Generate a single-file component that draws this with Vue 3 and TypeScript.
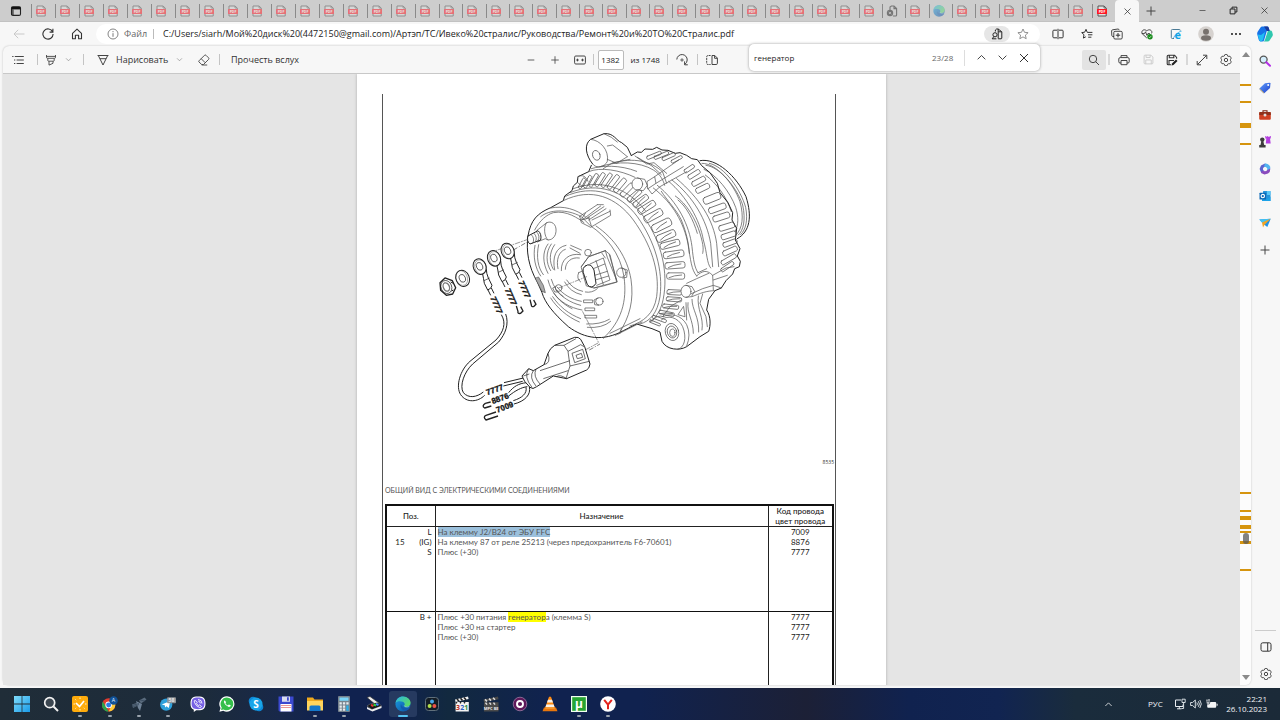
<script setup lang="ts">
import { ref } from 'vue'

type TabKind = 'pdf' | 'doc' | 'edge' | 'live'

const leftTabs: TabKind[] = Array.from({ length: 17 }, () => 'pdf')
const rightTabs: TabKind[] = Array.from({ length: 29 }, (_, i) =>
  i === 19 ? 'doc' : i === 21 ? 'edge' : i === 28 ? 'live' : 'pdf',
)

const query = ref('генератор')
const page = ref('1382')
const url =
  'C:/Users/siarh/Мой%20диск%20(4472150@gmail.com)/Артэп/ТС/Ивеко%20стралис/Руководства/Ремонт%20и%20ТО%20Стралис.pdf'

const browserActions = [
  { icon: 'split', label: 'Разделить экран' },
  { icon: 'favs', label: 'Избранное' },
  { icon: 'collections', label: 'Коллекции' },
  { icon: 'health', label: 'Производительность' },
  { icon: 'ie', label: 'Режим Internet Explorer' },
  { icon: 'profile', label: 'Профиль' },
  { icon: 'dots', label: 'Параметры' },
  { icon: 'copilot', label: 'Copilot' },
]

const sideApps = [
  { icon: 's-search', label: 'Поиск' },
  { icon: 's-tag', label: 'Покупки' },
  { icon: 's-tools', label: 'Инструменты' },
  { icon: 's-games', label: 'Игры' },
  { icon: 's-365', label: 'Microsoft 365' },
  { icon: 's-outlook', label: 'Outlook' },
  { icon: 's-drop', label: 'Drop' },
  { icon: 'plus', label: 'Настроить' },
]

const marks = [
  { y: 38, h: 2 },
  { y: 55, h: 2 },
  { y: 77, h: 5 },
  { y: 97, h: 2 },
  { y: 446, h: 2 },
  { y: 464, h: 2 },
  { y: 470, h: 4 },
  { y: 479, h: 4 },
  { y: 485, h: 2 },
  { y: 495, h: 3 },
  { y: 523, h: 2 },
]

const taskApps = [
  { icon: 't-win', label: 'Пуск', open: false },
  { icon: 't-search', label: 'Поиск', open: false },
  { icon: 't-clock', label: 'Часы', open: true },
  { icon: 't-chrome', label: 'Chrome', open: true },
  { icon: 't-sat', label: 'Спутник', open: true },
  { icon: 't-telegram', label: 'Telegram', open: true },
  { icon: 't-viber', label: 'Viber', open: false },
  { icon: 't-whatsapp', label: 'WhatsApp', open: false },
  { icon: 't-skype', label: 'Skype', open: false },
  { icon: 't-floppy', label: 'Total Commander', open: false },
  { icon: 't-folder', label: 'Проводник', open: true },
  { icon: 't-calc', label: 'Калькулятор', open: true },
  { icon: 't-scan', label: 'Сканер', open: false },
  { icon: 'edge', label: 'Edge', open: true },
  { icon: 't-resolve', label: 'DaVinci Resolve', open: false },
  { icon: 't-mpc', label: 'Media Player Classic', open: false },
  { icon: 't-mpcbe', label: 'MPC-BE', open: false },
  { icon: 't-disc', label: 'Диск', open: false },
  { icon: 't-vlc', label: 'VLC', open: false },
  { icon: 't-utorrent', label: 'uTorrent', open: true },
  { icon: 't-yandex', label: 'Yandex', open: true },
]

// Ventilation slots: centre x, centre y, length, width, angle
const rearSlots: number[][] = [
  [186, 190, 34, 9, -62], [203, 185, 40, 10, -62], [221, 181, 44, 11, -60], [240, 179, 46, 12, -58],
  [260, 181, 48, 12, -56], [280, 186, 50, 13, -53], [300, 196, 50, 14, -50], [321, 210, 50, 15, -46],
  [343, 227, 50, 16, -40], [362, 243, 52, 17, -36], [380, 262, 58, 19, -32], [400, 287, 60, 22, -28],
  [425, 316, 62, 25, -26], [438, 348, 60, 22, -22], [450, 373, 60, 19, -14], [461, 403, 62, 20, -8],
  [465, 436, 60, 19, -4], [467, 468, 54, 19, 0], [463, 517, 44, 15, 3], [462, 538, 46, 13, 4],
  [452, 560, 48, 12, 6], [440, 580, 46, 11, 12], [418, 597, 44, 9, 20], [405, 609, 34, 7, 22],
]
const frontSlots: number[][] = [
  [508, 146, 34, 11, -34], [522, 163, 40, 13, -32], [536, 184, 44, 15, -28], [548, 205, 44, 16, -26],
  [576, 235, 54, 21, -22], [592, 265, 54, 18, -20], [604, 291, 52, 18, -18], [620, 320, 48, 17, -17],
  [626, 346, 46, 16, -18], [630, 369, 44, 14, -20], [630, 393, 46, 15, -24], [626, 418, 50, 13, -30],
  [622, 440, 44, 11, -34],
]
const topSlots: number[][] = [
  [402, 106, 46, 10, -22], [424, 106, 46, 10, -22], [446, 110, 42, 10, -24], [470, 118, 36, 9, -28],
]
// Ring terminals: x, y
const lugs = [
  { x: 149, y: 440 },
  { x: 192, y: 415 },
  { x: 233, y: 393 },
]
</script>

<template>
  <div class="screen">
    <svg class="sprite" aria-hidden="true">
      <defs>
        <linearGradient id="g-edge" x1="0" y1="0" x2="1" y2="1">
          <stop offset="0" stop-color="#1b9de2" /><stop offset="1" stop-color="#0c4f9f" />
        </linearGradient>
        <linearGradient id="g-edge2" x1="0" y1="0" x2="1" y2="0.6">
          <stop offset="0" stop-color="#27b5e8" /><stop offset="1" stop-color="#5bd968" />
        </linearGradient>
        <linearGradient id="g-win" x1="0" y1="0" x2="1" y2="1">
          <stop offset="0" stop-color="#7fdcfb" /><stop offset="1" stop-color="#1a9be8" />
        </linearGradient>
        <linearGradient id="g-tag" x1="0" y1="0" x2="1" y2="1">
          <stop offset="0" stop-color="#5fa0ff" /><stop offset="1" stop-color="#1f3fc9" />
        </linearGradient>
        <symbol id="pdf" viewBox="0 0 12 12">
          <path d="M2 1h6l2.200 2v8H2z" fill="#e2e2e2" stroke="#555" stroke-width="1" />
          <path d="M8 1v2h2.200" fill="none" stroke="#555" stroke-width=".8" />
          <rect x="1" y="4" width="10" height="5" rx=".6" fill="#ff1622" />
          <text x="6" y="7.700" text-anchor="middle" font-size="3.500" font-weight="700" fill="#fff">PDF</text>
        </symbol>
        <symbol id="doc" viewBox="0 0 12 12">
          <path d="M4 5V2l1.400-1H8l2.600 2.400V10q0 1-1 1H7M8 1v2.600h2.400" fill="none" stroke="#222" stroke-width="1.100" />
          <circle cx="4" cy="8" r="3.200" fill="#222" /><circle cx="4" cy="8" r="1.100" fill="#ccc" />
          <path d="M1.400 6l5 4" stroke="#777" stroke-width=".5" />
        </symbol>
        <symbol id="edge" viewBox="0 0 16 16">
          <circle cx="8" cy="8" r="7.600" fill="url(#g-edge)" />
          <path d="M.5 7.200C1 3 4.200.4 8 .4c4.400 0 7.600 3 7.600 6.400 0 2.600-2 4-4.200 4-1.600 0-2.400-.6-2-1.400.6-1 .4-2.800-1.600-3.600C5 4.700 1.600 5.200.5 7.200z" fill="url(#g-edge2)" />
          <path d="M6 8.200C4.800 11 7 15 11.500 14.600 14 13.600 15 11.500 15 11.200c-2.500 1.800-7.800 1.400-9-3z" fill="#1459ae" />
          <path d="M9.200 9.500c0 1.400 2.800 2 5 1" fill="none" stroke="#bfe8f7" stroke-width=".5" />
        </symbol>
        <symbol id="workspace" viewBox="0 0 12 12">
          <rect x="1.500" y="1.800" width="9" height="8.600" rx="1.500" fill="none" stroke="#222" stroke-width="1.100" />
          <path d="M1.500 1.800h9v2.600h-9z" fill="#111" /><path d="M1.800 4v6M3 4.500v5.500" stroke="#222" stroke-width="1" />
        </symbol>
        <symbol id="back" viewBox="0 0 12 12"><path d="M11.500 6H1M5.200 1.800L1 6l4.200 4.200" fill="none" stroke="#c9c9c9" /></symbol>
        <symbol id="reload" viewBox="0 0 12 12"><path d="M10.600 3.800A5.100 5.100 0 1 0 11.100 6M10.900 .8v3.300H7.600" fill="none" stroke="#333" stroke-width="1.100" /></symbol>
        <symbol id="home" viewBox="0 0 12 12"><path d="M1.500 5.300L6 1.200l4.500 4.100v5.400H7.600V7.200H4.400v3.500H1.500z" fill="none" stroke="#333" stroke-width="1.100" stroke-linejoin="round" /></symbol>
        <symbol id="info" viewBox="0 0 12 12"><circle cx="6" cy="6" r="5" fill="none" stroke="#777" stroke-width=".9" /><path d="M6 5.200v3.600M6 3.100v1.100" stroke="#777" stroke-width="1" /></symbol>
        <symbol id="docfind" viewBox="0 0 12 12"><path d="M4.400 3.500V2L5.600 1h1.600v9.600M7.200 1L10.800 3.800v6.200q0 .8-.8.800H7.200M7.400 3.800h3" fill="none" stroke="#222" stroke-width="1" /><circle cx="4" cy="6.800" r="2.100" fill="none" stroke="#222" /><path d="M2.800 8.600L1.200 10.800h4.200" fill="none" stroke="#222" /></symbol>
        <symbol id="star" viewBox="0 0 12 12"><path d="M6 1l1.500 3.300 3.600.4-2.700 2.400.8 3.600L6 8.900l-3.200 1.800.8-3.600L.9 4.700l3.600-.4z" fill="none" stroke="#777" stroke-width=".8" stroke-linejoin="round" /></symbol>
        <symbol id="split" viewBox="0 0 12 12"><path d="M5 2.200H1.800q-.9 0-.9.900v5.800q0 .9.900.900H5M7 2.200h3.200q.9 0 .9.900v5.800q0 .9-.9.900H7M6 .8v10.400" fill="none" stroke="#333" stroke-width="1" /></symbol>
        <symbol id="favs" viewBox="0 0 12 12"><path d="M6.200 4.200L5 1.300 3.700 4.200.7 4.600 3 6.700l-.6 3.400L4.800 8.800M6.200 4.400h5.200M7 6.800h4.400M7.200 9.200h3.200" fill="none" stroke="#333" stroke-width="1" stroke-linejoin="round" /></symbol>
        <symbol id="collections" viewBox="0 0 12 12"><path d="M3 8.500H2q-1 0-1.200-1L.6 3q0-1 1-1.200L7 1q1 0 1.200 1.200M2.800 9V4.500q0-1.200 1.200-1.200h6q1.200 0 1.200 1.200v5.300q0 1.200-1.200 1.200H4q-1.200 0-1.200-1.200z" fill="none" stroke="#333" stroke-width=".9" /><path d="M7 5v4.400M4.800 7.200h4.400" stroke="#333" stroke-width="1" /></symbol>
        <symbol id="health" viewBox="0 0 12 12"><path d="M5.800 10L1.300 5.800C-.4 3 3 .2 5.800 2.900 8.600.2 12 3 10.500 5.400M.8 5.600h2.700l1-1.800 1.400 3.500 1-1.700h2" fill="none" stroke="#333" stroke-width=".9" /><circle cx="9" cy="8.800" r="2.700" fill="#178a1c" /><path d="M7.700 8.800l1 1 1.700-2" stroke="#fff" fill="none" stroke-width=".6" /></symbol>
        <symbol id="ie" viewBox="0 0 12 12"><path d="M4 10.500H2.300q-1 0-1-1V2.500q0-1 1-1h7q1 0 1 1" fill="none" stroke="#4b7a95" stroke-width="1" /><text x="7.700" y="10.700" text-anchor="middle" font-size="11" font-weight="700" fill="#13a3e6">e</text><path d="M4 9.900C2.500 10 8 3.500 11.500 3.200" fill="none" stroke="#13a3e6" stroke-width=".8" /></symbol>
        <symbol id="profile" viewBox="0 0 16 16"><circle cx="8" cy="8" r="7.800" fill="#d6d2cf" /><circle cx="8" cy="5.700" r="3" fill="#77716d" /><ellipse cx="8" cy="12" rx="5" ry="2.800" fill="#77716d" /></symbol>
        <symbol id="dots" viewBox="0 0 12 12"><circle cx="2" cy="6" r=".9" /><circle cx="6" cy="6" r=".9" /><circle cx="10" cy="6" r=".9" /></symbol>
        <symbol id="copilot" viewBox="0 0 16 16">
          <path d="M5.200.6h4.900q1.200 0 1.700 1.300l.9 3H9.800L7 14.500q-.4 1-1.600 1H3.600q-1.400 0-1.800-1.400L.3 8.500Q-.1 7 .8 5.500L3.500 1.500q.5-.9 1.700-.9z" fill="#1672e8" />
          <path d="M11 4.400h2.400q1.300 0 1.700 1.300l.7 2.500q.2 1-.4 2l-2.800 4.200q-.7 1.100-2 1.100H6.200q1.300-.3 1.700-1.500z" fill="#2fc7ae" />
          <path d="M7 .6h3.100q1.200 0 1.700 1.300l.9 3H9.900z" fill="#193a9c" /><path d="M.7 8.500L4 9l4-3-2 8-2 1.500q-1.400 0-1.800-1.400z" fill="#22bdf2" />
        </symbol>
        <symbol id="plus" viewBox="0 0 12 12"><path d="M6 1.500v9M1.500 6h9" stroke="#444" stroke-width="1" /></symbol>
        <symbol id="minus" viewBox="0 0 12 12"><path d="M2 6h8" stroke="#444" stroke-width="1" /></symbol>
        <symbol id="cross" viewBox="0 0 12 12"><path d="M2 2l8 8M10 2l-8 8" stroke="#333" stroke-width="1" /></symbol>
        <symbol id="up" viewBox="0 0 12 12"><path d="M1.800 8L6 3.800 10.200 8" fill="none" stroke="currentColor" stroke-width="1" /></symbol>
        <symbol id="down" viewBox="0 0 12 12"><path d="M1.800 4L6 8.200 10.200 4" fill="none" stroke="currentColor" stroke-width="1" /></symbol>
        <symbol id="list" viewBox="0 0 12 12"><path d="M2.800 2.500h9M4.600 6h7.200M4.600 9.500h7.200M.2 2.500h1.300M2 6h1.300M2 9.500h1.300" stroke="#444" stroke-width="1" /></symbol>
        <symbol id="marker" viewBox="0 0 12 12"><path d="M1.500 1v2.300q0 1 1 1h7q1 0 1-1V1M2.800 4.400v2q0 .8.700.8h5q.7 0 .7-.8v-2M4 7.300v3.800l4-1.800v-2M1.500 2.400h9" fill="none" stroke="#444" stroke-width=".9" /></symbol>
        <symbol id="pen" viewBox="0 0 12 12"><path d="M.6 1.500h10.800M1.300 1.500L6 11l4.700-9.500M2.900 4.700h6.200" fill="none" stroke="#444" stroke-width="1" stroke-linejoin="round" /></symbol>
        <symbol id="eraser" viewBox="0 0 12 12"><path d="M1 6.800L6.500 1.300q.8-.7 1.500 0l2.600 2.600q.7.700 0 1.500L5.500 10.500H3.700L1 8q-.6-.6 0-1.200zM3.200 4.700l4 4M3.700 11h5.500" fill="none" stroke="#444" stroke-width=".9" /></symbol>
        <symbol id="fit" viewBox="0 0 12 12"><rect x=".6" y="2" width="10.800" height="8" rx="1.200" fill="none" stroke="#444" /><path d="M2 6l2-1.700v3.400zM10 6L8 4.300v3.400z" fill="#444" /><path d="M3 6h2M7 6h2" stroke="#444" stroke-width=".8" /></symbol>
        <symbol id="rotate" viewBox="0 0 12 12"><path d="M.8 5.500A5.200 5.200 0 0 1 11.200 6q0 2.600-2.400 4.400M8.600 7.400v3.400h3.200" fill="none" stroke="#444" stroke-width="1" /><circle cx="6" cy="6" r="1.100" fill="none" stroke="#444" stroke-width=".9" /></symbol>
        <symbol id="pages" viewBox="0 0 12 12"><path d="M4.600 1.500H2q-1.300 0-1.300 1.300v6.400q0 1.300 1.300 1.300h2.600" fill="none" stroke="#444" stroke-dasharray="2 .8" /><path d="M6 1.500h2.800l2.600 2.600v5.200q0 1.200-1.200 1.200H6zM8.600 1.500v2.800h2.800" fill="none" stroke="#444" stroke-width="1" /></symbol>
        <symbol id="search" viewBox="0 0 12 12"><circle cx="5" cy="5" r="3.700" fill="none" stroke="#444" /><path d="M7.700 7.700L11 11" stroke="#444" /></symbol>
        <symbol id="print" viewBox="0 0 12 12"><path d="M3 3.500V1.600h6v1.900M3 9H2Q.8 9 .8 7.800V5Q.8 3.600 2.200 3.600h7.600q1.400 0 1.400 1.400v2.800Q11.200 9 10 9H9M3 6.500h6v4.200H3z" fill="none" stroke="#444" stroke-width="1" /></symbol>
        <symbol id="save" viewBox="0 0 12 12"><path d="M1.200 2.200q0-1 1-1h6.400l2.200 2.200v6.400q0 1-1 1H2.200q-1 0-1-1zM3.300 1.200v2.600h4.500V1.200M3 10.800V6.500h6v4.300" fill="none" stroke="currentColor" stroke-width="1" /></symbol>
        <symbol id="saveas" viewBox="0 0 12 12"><path d="M5 10.800H2.200q-1 0-1-1V2.200q0-1 1-1h6.400l2 2.200v1.400M3.300 1.200v2.600h4.500V1.200M3 10.500V6.500h5" fill="none" stroke="#333" stroke-width="1.100" /><path d="M5.500 11.400l.5-2 4-4 1.500 1.500-4 4z" fill="#222" /></symbol>
        <symbol id="expand" viewBox="0 0 12 12"><path d="M7 1.200h3.800V5M10.600 1.400L1.400 10.600M1.200 7v3.800H5" fill="none" stroke="#444" stroke-width="1" /></symbol>
        <symbol id="gear" viewBox="0 0 12 12"><path d="M4.700 1l.3-.6h2l.3.6.4 1.200 1.300.2 1-.2 1.300 1.900L10.500 5.200v1.600l.8 1.100L10 9.800l-1.200-.2-1.100.5-.5 1.500H4.800L4.300 10l-1.100-.5L2 9.800.7 7.900l.8-1.100V5.200L.7 4.100 2 2.200l1.200.2L4.300 2z" fill="none" stroke="#444" stroke-width=".9" stroke-linejoin="round" /><circle cx="6" cy="6" r="1.700" fill="none" stroke="#444" /></symbol>
        <symbol id="panel" viewBox="0 0 12 12"><rect x="1" y="1.800" width="10" height="8.400" rx="1.800" fill="none" stroke="#333" stroke-width="1" /><path d="M7.700 2v8" stroke="#333" /></symbol>
        <symbol id="s-search" viewBox="0 0 12 12"><circle cx="4.600" cy="4.600" r="3.500" fill="#d4eefc" stroke="#555" stroke-width="1.300" /><path d="M7.300 7.300L11 10.800" stroke="#b52ee8" stroke-width="2" stroke-linecap="round" /></symbol>
        <symbol id="s-tag" viewBox="0 0 12 12"><path d="M6 1.200L10.800.8q.7 0 .7.700l-.5 4.500L5.500 11q-.6.500-1.200 0L.7 7.500q-.6-.6 0-1.200z" fill="url(#g-tag)" /><path d="M.5 6.800L4.900 11" stroke="#f6c44c" stroke-width=".8" /><circle cx="9.200" cy="3" r="1" fill="#fff" /></symbol>
        <symbol id="s-tools" viewBox="0 0 12 12"><path d="M4 3V1.800h4V3" fill="none" stroke="#7d2412" stroke-width="1.100" /><rect x=".2" y="3" width="11.600" height="7.700" rx="1" fill="#cf4022" /><path d="M.2 4q0-1 1-1h9.600q1 0 1 1v2H.2z" fill="#91301a" /><circle cx="6" cy="6.100" r="1.500" fill="#dedede" /></symbol>
        <symbol id="s-games" viewBox="0 0 12 12"><path d="M6.300 0v2.500h1l-.5 5h4.900l-.7-5h.8V0h-1.200v1H9.300V0H8.200v1h-.8V0z" fill="#b43fe0" /><circle cx="3.300" cy="3.600" r="2.200" fill="#3d3d3d" /><path d="M2.300 5h2l.9 4H1.500zM.2 9h6.400v2.600H.2z" fill="#3d3d3d" /></symbol>
        <symbol id="s-365" viewBox="0 0 12 12"><path d="M6 .5L2 2.500.6 6l1.700 4L6 8 4 6l2-2.200 4 2.200L9 2z" fill="#5b62cf" /><path d="M6 .5Q10 .5 11.300 4l-.4 4L8 8l.3-3L5 3.500z" fill="#51b4f0" /><path d="M11.300 5.500Q11.500 9 9 10.500L5.500 11.500 2 10l1-2 3.300.2z" fill="#8a4bbd" /><circle cx="6" cy="6" r="2" fill="#f7f7f7" /></symbol>
        <symbol id="s-outlook" viewBox="0 0 12 12"><rect x="4" y="1" width="7.500" height="10" rx=".6" fill="#2795dc" /><path d="M8 1h3.500v4H8z" fill="#5bc8f6" /><path d="M3 7l5 2 3.500-2.500V11H3z" fill="#1ca2e8" /><rect x=".5" y="2.800" width="6.600" height="6.600" rx=".5" fill="#0b69b7" /><circle cx="3.800" cy="6.100" r="1.700" fill="none" stroke="#fff" stroke-width="1.100" /></symbol>
        <symbol id="s-drop" viewBox="0 0 12 12"><path d="M.3 2.500l11.400-.7L8.300 10 5 7.500z" fill="#1c92e8" /><path d="M.3 2.500l11.400-.7L3.400 6z" fill="#43c3f2" /><path d="M3 5.500l8.700-3.700L5.500 7.800 4 10.500z" fill="#f2a324" /></symbol>
        <symbol id="t-win" viewBox="0 0 16 16"><path d="M0 0h7.600v7.600H0zM8.400 0H16v7.600H8.400zM0 8.400h7.600V16H0zM8.400 8.400H16V16H8.400z" fill="url(#g-win)" /></symbol>
        <symbol id="t-search" viewBox="0 0 16 16"><circle cx="6.700" cy="6.700" r="5" fill="#3b4650" stroke="#f2f2f2" stroke-width="1.700" /><path d="M10.500 10.500L15 15" stroke="#f2f2f2" stroke-width="1.900" /></symbol>
        <symbol id="t-clock" viewBox="0 0 16 16"><rect width="16" height="16" rx="2" fill="#ffac0c" /><path d="M4 7l3.500 3.500L12 5" fill="none" stroke="#fff" stroke-width="1.700" /><path d="M8 1.500v1.500M8 13v1.500M1.500 8H3M13 8h1.500M3.400 3.400l.8.800M3.400 12.600l.8-.8M12.600 12.600l-.8-.8" stroke="#fff" stroke-width=".8" /></symbol>
        <symbol id="t-chrome" viewBox="0 0 18 18"><circle cx="7.500" cy="10" r="7.500" fill="#e33b2e" /><path d="M1 6.200L6 15l1.500 2.500A7.500 7.500 0 0 1 1 6.200z" fill="#2ba24c" /><path d="M14.300 7A7.500 7.500 0 0 1 7.500 17.500L11 10 7.500 7z" fill="#fcc934" /><circle cx="7.500" cy="10" r="3.700" fill="#fff" /><circle cx="7.500" cy="10" r="2.800" fill="#2b7be4" /><circle cx="13" cy="5" r="4.800" fill="#105197" /><text x="13" y="7.200" text-anchor="middle" font-size="6" fill="#e8f2ff">A</text></symbol>
        <symbol id="t-sat" viewBox="0 0 16 16"><path d="M8 4.500l5.500-3 2 2-5.500 4zM1 8.500l6-2 1 2.500-6 3z" fill="#596a7c" /><path d="M5 5l6 3-2 7-2-3z" fill="#708296" /><path d="M9 4l5 1M1 9.500l7-2M2 11l6-2.500" stroke="#34465a" stroke-width=".7" /></symbol>
        <symbol id="t-telegram" viewBox="0 0 18 16"><circle cx="7" cy="8.700" r="6.900" fill="#2ea0db" /><path d="M2 8.500l9.500-4-1.600 8-2.600-2-1.500 1.500-.4-2.500z" fill="#fff" /><rect x="8" y=".5" width="10" height="6.600" rx="1" fill="#8e9499" /><text x="13" y="5.800" text-anchor="middle" font-size="6" font-weight="700" fill="#e4e4e4">58</text></symbol>
        <symbol id="t-viber" viewBox="0 0 16 16"><path d="M8 .4C2.500.4.5 2 .5 7.500c0 3.500.8 5.200 3.300 6.200V16l2.400-1.800c7 .5 9.300-1.400 9.300-6.700C15.500 2 13.500.4 8 .4z" fill="#fff" /><path d="M8 1.500C3 1.500 1.600 3 1.600 7.500 1.600 11.500 3 13.200 8 13.200s6.400-1.700 6.400-5.700S13 1.500 8 1.500z" fill="#7762e4" /><path d="M5 4.200Q3.800 4.800 4.500 6.500q1.500 3.700 5 5 1.400.3 2-1l-2-1.600-1 .7Q6.800 8.700 6.500 7.300l.7-.9zM8 3.500q4 .2 4 4M8.300 5.200q2 .2 2 2.200" fill="none" stroke="#fff" stroke-width=".9" /></symbol>
        <symbol id="t-whatsapp" viewBox="0 0 16 16"><path d="M8 .2A7.700 7.700 0 0 0 1.500 12L.4 15.800l3.900-1A7.700 7.700 0 1 0 8 .2z" fill="#fff" /><path d="M8 1.500A6.400 6.400 0 0 0 2.700 11.500L2 14l2.600-.6A6.400 6.400 0 1 0 8 1.500z" fill="#35bf4b" /><path d="M5.800 4.200q-1.500.8-.6 2.800 1.300 2.800 4.500 4 2 .2 2-1.700L9.800 8.400l-.9 1Q7 8.500 6.400 7.200l.7-1z" fill="#fff" /></symbol>
        <symbol id="t-skype" viewBox="0 0 16 16"><circle cx="5" cy="5" r="4.300" fill="#0d87d7" /><circle cx="11" cy="11" r="4.300" fill="#0d87d7" /><circle cx="8" cy="8" r="6.500" fill="#19a5e9" /><text x="8" y="11.500" text-anchor="middle" font-size="10" font-weight="700" fill="#fff">S</text></symbol>
        <symbol id="t-floppy" viewBox="0 0 16 16"><path d="M.5.500h15v15H1.500l-1-1z" fill="#3b49cf" /><path d="M4 .5h8v5.300H4z" fill="#d9dcee" /><path d="M9 1.300h1.800v3.500H9z" fill="#3b49cf" /><path d="M2.500 8h11v7.500h-11z" fill="#fff" /><path d="M3 9.500h10M3 11.500h10" stroke="#e36868" stroke-width=".7" /></symbol>
        <symbol id="t-folder" viewBox="0 0 16 16"><path d="M0 1.500h6l1.500 2H16V14H0z" fill="#efa91d" /><path d="M0 5h16v9.500H0z" fill="#ffd45c" /><path d="M2.500 15v-4q0-1.500 1.500-1.500h8q1.500 0 1.500 1.500v4z" fill="#1377ca" /></symbol>
        <symbol id="t-calc" viewBox="0 0 16 16"><rect x="2" width="12" height="16" rx="1" fill="#77838d" /><path d="M3.500 1.500h9v3.300h-9z" fill="#7ad5f8" /><path d="M3.500 6.300h2.300v2.200H3.500zM6.900 6.300h2.300v2.200H6.900zM10.300 6.300h2.300v2.200h-2.300zM3.500 9.500h2.300v2.200H3.500zM6.900 9.500h2.300v2.200H6.900zM3.500 12.600h2.300v2.200H3.500zM6.900 12.600h2.300v2.200H6.900z" fill="#e5ebef" /><path d="M10.300 9.500h2.300v5.300h-2.300z" fill="#27afea" /></symbol>
        <symbol id="t-scan" viewBox="0 0 16 16"><path d="M1 1.500l3-1 9 6.500-3 2z" fill="#eee" stroke="#333" stroke-width=".7" /><path d="M1 10l3-2 8-1.500 3.500 3.500L6 13.500z" fill="#161616" stroke="#999" stroke-width=".4" /><path d="M1 11l5 2.500 9.500-3.500v2L6.500 15.500 1 13z" fill="#eee" /><path d="M5 9l2.500 1" stroke="#e33" stroke-width="2" /><path d="M7.500 8.500L10 9.500" stroke="#3c3" stroke-width="2" /><path d="M10 8l2.500 1" stroke="#48f" stroke-width="2" /></symbol>
        <symbol id="t-resolve" viewBox="0 0 16 16"><rect x="1.500" y="1.500" width="13" height="13" rx="3" fill="#141d26" stroke="#60707b" /><circle cx="8" cy="5.500" r="2" fill="#4aa8e8" /><circle cx="5.600" cy="9.900" r="2" fill="#b4df4a" /><circle cx="10.400" cy="9.900" r="2" fill="#ec5548" /></symbol>
        <symbol id="t-mpc" viewBox="0 0 16 16"><path d="M1 3.500L14 .5l.6 2.500L1.600 6zM1.600 6h13.200v9.500H1.600z" fill="#f3f3f3" /><path d="M3 3l2 2.300M6.500 2.300l2 2.300M10 1.500l2 2.300M2 6.300l1 1M6 6.300l1 1M10 6.300l1 1" stroke="#222" stroke-width="1.600" /><text x="4" y="14.200" text-anchor="middle" font-size="7" font-weight="700" fill="#b82f24">3</text><text x="8.200" y="14.200" text-anchor="middle" font-size="7" font-weight="700" fill="#2b60c5">2</text><text x="12.300" y="14.200" text-anchor="middle" font-size="7" font-weight="700" fill="#2f8c3d">1</text></symbol>
        <symbol id="t-mpcbe" viewBox="0 0 16 16"><path d="M.5 3.500L15 .5l.5 2.700L1 6.200zM1 6.200h14.500v9.300H1z" fill="#4a4a4a" /><path d="M2 3.400l2 2M6 2.600l2 2M10 1.800l2 2M2.500 6.600l1.500 2M6.500 6.600l1.500 2M10.500 6.600l1.500 2" stroke="#ddd" stroke-width="1.500" /><text x="8.200" y="13.500" text-anchor="middle" font-size="4" font-weight="700" fill="#e9e9e9">MPC BE</text></symbol>
        <symbol id="t-disc" viewBox="0 0 16 16"><circle cx="8" cy="8" r="6.800" fill="#5e1859" stroke="#9e7aa5" stroke-width=".8" /><circle cx="8" cy="8" r="3" fill="none" stroke="#fff" stroke-width="1.900" /></symbol>
        <symbol id="t-vlc" viewBox="0 0 16 16"><path d="M7 .8h2L13.300 13H2.700z" fill="#ff8a10" /><path d="M6 3.800h4l1 2.800H5zM4.300 8.600h7.400l.8 2.400H3.500z" fill="#f7f1e9" /><path d="M2 11.500h12l1.500 3.800H.5z" fill="#e8770d" /><path d="M3.500 11.500h9l.3 1H3.200z" fill="#ffb14f" /></symbol>
        <symbol id="t-utorrent" viewBox="0 0 16 16"><rect width="16" height="16" fill="#f2fff0" /><rect x="1.200" y="1.200" width="13.600" height="13.600" fill="#27a432" /><text x="8" y="11.500" text-anchor="middle" font-size="12" font-weight="700" fill="#fff">µ</text></symbol>
        <symbol id="t-yandex" viewBox="0 0 16 16"><circle cx="8" cy="8" r="7.800" fill="#fff" /><path d="M4.200 3.800L8 8.600l3.800-4.800M8 8.300v5" fill="none" stroke="#e3231d" stroke-width="2" /></symbol>
        <symbol id="net" viewBox="0 0 12 12"><path d="M7 2H1.500v6.500H9V6.500M3 10.800h4.500M5.300 8.500v2.300" fill="none" stroke="#e8edf1" stroke-width="1" /><path d="M8 1.200h3.200v3.300H8zM9.600 4.500v6H7.500" fill="none" stroke="#e8edf1" stroke-width=".9" /></symbol>
        <symbol id="sound" viewBox="0 0 12 12"><path d="M.6 4.500h2L5.300 2v8L2.600 7.500h-2zM6.800 4.500q1.200 1.500 0 3M8.300 3.200q2.200 2.800 0 5.600M9.800 2q3 4 0 8" fill="none" stroke="#e8edf1" stroke-width=".9" /></symbol>
        <symbol id="battery" viewBox="0 0 12 12"><rect x="1.200" y="4" width="9" height="5.700" rx="1" fill="#f4f6f7" /><path d="M10.600 5.800h1v2h-1z" fill="#f4f6f7" /><path d="M1 1.500v3M3 1v3" stroke="#f4f6f7" /><path d="M0 4h4l-.7 2H1z" fill="#f4f6f7" stroke="#1b2a39" stroke-width=".6" /></symbol>
      </defs>
    </svg>

    <header class="tabs">
      <button class="work" aria-label="Рабочие области"><svg class="i12"><use href="#workspace" /></svg></button>
      <div class="tabset first">
        <button v-for="(t, i) in leftTabs" :key="i" class="tab" aria-label="PDF"><svg class="i12 dim"><use :href="'#' + t" /></svg></button>
      </div>
      <div class="tabset rest">
        <button v-for="(t, i) in rightTabs" :key="i" class="tab" aria-label="PDF">
          <svg class="i12" :class="{ dim: t !== 'live' }"><use :href="t === 'live' ? '#pdf' : '#' + t" /></svg>
        </button>
      </div>
      <button class="tab-active" aria-label="Закрыть вкладку"><svg class="i9"><use href="#cross" /></svg></button>
      <button class="newtab" aria-label="Новая вкладка"><svg class="i12"><use href="#plus" /></svg></button>
      <div class="winctl">
        <button aria-label="Свернуть"><svg class="i9"><use href="#minus" /></svg></button>
        <button aria-label="Восстановить">
          <svg class="i9" viewBox="0 0 12 12"><path d="M1.500 4h6.500v6.500H1.500zM4 4V1.500h6.500V8H8" fill="none" stroke="#222" stroke-width="1.300" /></svg>
        </button>
        <button aria-label="Закрыть"><svg class="i9"><use href="#cross" /></svg></button>
      </div>
    </header>

    <nav class="address">
      <div class="nav-left">
        <button aria-label="Назад"><svg class="i12"><use href="#back" /></svg></button>
        <button aria-label="Обновить"><svg class="i12"><use href="#reload" /></svg></button>
        <button aria-label="Домой"><svg class="i12"><use href="#home" /></svg></button>
      </div>
      <div class="pill">
        <svg class="i12"><use href="#info" /></svg>
        <span class="scheme">Файл</span>
        <input class="url" aria-label="Адрес" :value="url" />
        <button class="pill-find" aria-label="Найти"><svg class="i12"><use href="#docfind" /></svg></button>
        <button class="pill-star" aria-label="В избранное"><svg class="i12"><use href="#star" /></svg></button>
      </div>
      <div class="actions">
        <button v-for="a in browserActions" :key="a.icon" :aria-label="a.label">
          <svg :class="a.icon === 'copilot' || a.icon === 'profile' ? 'i16' : 'i12'"><use :href="'#' + a.icon" /></svg>
        </button>
      </div>
    </nav>

    <div class="body">
      <main class="viewer">
        <div class="column">
          <div class="toolbar">
            <div class="tools left">
              <button class="w29" aria-label="Содержание"><svg class="i12"><use href="#list" /></svg></button>
              <i class="sep" />
              <button class="w26" aria-label="Маркер"><svg class="i12"><use href="#marker" /></svg></button>
              <button class="w9 soft" aria-label="Цвет маркера"><svg class="i7"><use href="#down" /></svg></button>
              <i class="sep far" />
              <button class="draw"><svg class="i12"><use href="#pen" /></svg><span>Нарисовать</span></button>
              <button class="w9 soft" aria-label="Параметры пера"><svg class="i7"><use href="#down" /></svg></button>
              <button class="w39" aria-label="Ластик"><svg class="i12"><use href="#eraser" /></svg></button>
              <i class="sep near" />
              <button class="read">Прочесть вслух</button>
            </div>
            <div class="tools mid">
              <button class="w24" aria-label="Уменьшить"><svg class="i10"><use href="#minus" /></svg></button>
              <button class="w24" aria-label="Увеличить"><svg class="i10"><use href="#plus" /></svg></button>
              <button class="w26" aria-label="По ширине"><svg class="i12"><use href="#fit" /></svg></button>
              <i class="sep" />
              <input v-model="page" class="page-no" aria-label="Номер страницы" />
              <span class="total">из 1748</span>
              <i class="sep" />
              <button class="w29" aria-label="Повернуть"><svg class="i12"><use href="#rotate" /></svg></button>
              <i class="sep" />
              <button class="w29" aria-label="Вид страниц"><svg class="i12"><use href="#pages" /></svg></button>
            </div>
            <div class="tools right">
              <button class="w24 pressed" aria-label="Поиск"><svg class="i12"><use href="#search" /></svg></button>
              <i class="sep gap" />
              <button class="w24" aria-label="Печать"><svg class="i12"><use href="#print" /></svg></button>
              <button class="w24 off" aria-label="Сохранить"><svg class="i11"><use href="#save" /></svg></button>
              <button class="w24" aria-label="Сохранить как"><svg class="i12"><use href="#saveas" /></svg></button>
              <i class="sep gap" />
              <button class="w24" aria-label="Во весь экран"><svg class="i12"><use href="#expand" /></svg></button>
              <button class="w24" aria-label="Настройки"><svg class="i12"><use href="#gear" /></svg></button>
            </div>
          </div>

          <div class="canvas">
            <article class="sheet">
              <div class="frame">
                <figure>
                  <svg class="drawing" viewBox="430 120 330 310" role="img" aria-label="Генератор">
                    <g transform="translate(520 120) scale(.33333)" fill="none" stroke="#555" stroke-width="2.200" stroke-linejoin="round" stroke-linecap="round">
                      <path class="edge" d="M540 122C590 112 650 170 678 230C697 290 690 335 652 356" />
                      <path d="M546 130C590 130 640 190 660 245C672 290 668 325 648 345M558 136C600 140 652 205 668 255C678 300 670 332 655 345M568 130C615 140 662 210 677 262C684 300 678 328 662 344M552 148C590 165 630 215 647 262C656 290 656 315 645 335M556 165C590 190 620 230 634 275" />
                      <path class="edge" d="M335 106L352 96L364 97L375 87L398 88L410 82L426 90L444 91L466 100L480 98L500 106L515 116L532 119L545 137L570 158L592 190L600 218L624 248L638 278L636 300L650 325L646 360L660 386L652 408L661 424L658 440L644 446L638 462L618 482L604 504L585 512L566 538L560 570C573 590 572 617 566 634L540 650L500 680C478 693 440 690 426 664L420 636L396 626L350 612L310 632C250 665 195 657 145 620C98 578 75 548 66 518L52 486C25 440 18 392 24 348C32 300 52 280 92 263L130 242L134 228L156 212L160 198L172 187L174 170L206 155L214 136" />
                      <path class="edge" d="M218 132C196 105 192 72 212 58L252 41C282 38 288 62 305 68L322 82L334 107" />
                      <path d="M212 58C240 60 268 90 262 124C256 140 228 148 218 132M252 41Q276 50 292 66M262 78L278 75L300 92L322 110M262 118L290 130L322 110M250 146L278 128L330 118" />
                      <ellipse cx="229" cy="106" rx="11" ry="15" transform="rotate(-20 229 106)" />
                      <path d="M206 155C240 140 300 150 345 172M214 146C245 136 300 134 350 154M240 140C290 122 360 125 400 150C420 162 430 180 434 196M278 130C340 110 395 124 428 156L440 190M174 170C188 162 198 170 204 184M172 187L188 200M345 108L380 132L402 128L440 160M352 112L396 138L424 164" />
                      <path d="M382 184L404 170L408 190L384 206zM404 170L476 120M408 190L490 140M384 206L396 222L420 200L500 155" />
                      <path d="M134 230C220 190 300 220 352 290C405 365 430 450 420 530C412 580 390 604 360 612M150 218C235 184 310 212 365 282C418 352 444 440 432 524C426 566 412 590 390 606M130 242C215 200 290 232 340 300C392 372 420 450 410 530C402 582 370 606 330 618M160 206C240 176 320 200 376 272" />
                      <path d="M62 290C88 268 140 266 184 290L212 318C255 346 302 400 312 470C322 545 304 604 250 655M92 264C130 256 170 268 196 290M228 318C285 356 322 414 333 478C342 540 330 590 296 642M44 330C60 300 80 284 100 278C140 270 176 296 192 308" />
                      <path d="M400 204C460 250 492 310 504 372C512 420 514 450 530 468M412 196C474 246 508 316 516 380C520 420 524 444 534 458M424 214C440 240 470 270 484 300C500 340 506 370 508 400M446 184C500 230 540 300 550 360C562 400 560 430 572 444M456 180C520 230 560 300 572 370L578 440M470 176C540 236 580 300 590 370L596 440M466 228C500 250 528 300 540 340C552 380 550 390 548 400M474 240C500 260 520 300 532 340" />
                      <path d="M530 468C548 450 562 450 578 466L580 510M534 458L560 446M578 466L618 444L642 440M580 480L622 466M500 490L530 476L566 460M512 522L548 506L580 496L604 504M516 530C540 520 560 512 585 512" />
                      <path d="M504 548C500 580 520 600 520 640M516 538C516 570 538 590 536 636M535 528C530 570 552 590 546 630M548 522L540 550L558 590L562 620M490 560L474 584L494 590zM498 548L500 600M484 540L450 560L428 590M430 590Q410 582 396 604" />
                      <path d="M424 600C440 584 474 590 488 620C502 655 492 684 474 688M430 590C450 578 484 584 500 614Q514 644 500 678" />
                      <ellipse cx="456" cy="636" rx="20" ry="26" transform="rotate(-15 456 636)" /><ellipse cx="456" cy="636" rx="14" ry="18" transform="rotate(-15 456 636)" /><ellipse cx="457" cy="638" rx="8" ry="11" />
                      <rect v-for="(s, i) in rearSlots" :key="'r' + i" :x="-s[2] / 2" :y="-s[3] / 2" :width="s[2]" :height="s[3]" :rx="s[3] / 3" :transform="`translate(${s[0]} ${s[1]}) rotate(${s[4]})`" />
                      <path v-for="(s, i) in rearSlots.slice(8, 22)" :key="'q' + i" d="M-20 5Q-6 -2 18 -3" :transform="`translate(${s[0]} ${s[1]}) rotate(${s[4]})`" />
                      <rect v-for="(s, i) in frontSlots" :key="'f' + i" :x="-s[2] / 2" :y="-s[3] / 2" :width="s[2]" :height="s[3]" :rx="s[3] / 3" :transform="`translate(${s[0]} ${s[1]}) rotate(${s[4]})`" />
                      <rect v-for="(s, i) in topSlots" :key="'t' + i" :x="-s[2] / 2" :y="-s[3] / 2" :width="s[2]" :height="s[3]" :rx="s[3] / 3" :transform="`translate(${s[0]} ${s[1]}) rotate(${s[4]})`" />
                      <ellipse cx="352" cy="192" rx="16" ry="18" fill="#fff" /><path d="M352 174L374 178L382 196L370 212L352 210" />
                      <ellipse cx="498" cy="514" rx="15" ry="18" fill="#fff" /><path d="M498 496L516 500L524 514L514 530L498 532" />
                      <path d="M178 290L232 254M186 300L242 258M198 296L252 260M206 300L258 266M216 300L270 274M180 292L184 308L212 322L272 286L270 270M184 300L208 294M206 292L214 318M232 254L250 254M184 298L196 280" />
                      <path fill="#fff" d="M50 332L80 308C100 300 114 320 106 344C98 362 82 362 76 356L52 366" /><path d="M80 308C70 318 72 350 84 360" />
                      <path class="edge" fill="#fff" d="M24 348L54 332Q66 342 62 360L30 372Q18 362 24 348" /><path d="M34 344Q46 356 38 370M42 340Q54 352 46 366M50 336Q62 348 54 362" />
                      <path d="M45 376C38 410 46 445 62 468M56 374C48 410 54 444 70 464M84 372C66 396 68 430 84 460M94 372C76 396 78 430 92 452M104 374C86 400 88 426 100 448M138 376C108 382 96 410 104 450M136 388C116 394 108 420 114 446M182 404C148 398 122 418 124 452M178 414C154 410 136 426 136 448M152 376L184 390M150 384L180 400M134 486Q150 516 184 524M140 480Q158 508 188 514M84 480C94 520 120 548 156 566M94 478Q104 512 130 530M92 534C110 562 140 590 178 606M98 530C118 560 146 582 182 596M108 510C124 530 150 548 182 556M112 502C130 524 154 538 184 544M102 520C118 544 150 564 186 570M200 612Q240 614 268 598M202 622Q246 626 272 604" />
                      <path d="M192 540h26v8h-26zM196 564h28v8h-28zM196 586h34v8h-34zM196 516Q216 520 232 506" />
                      <circle cx="116" cy="504" r="10" /><circle cx="238" cy="544" r="11" /><circle cx="204" cy="398" r="10" /><circle cx="304" cy="458" r="14" /><path d="M304 444L322 450L320 472L308 474M108 500L98 504L104 516L114 516M234 534L222 540L224 554L236 556" />
                      <path fill="#fff" d="M184 440L206 410L256 392L270 404L290 486L250 496L222 504L200 498z" />
                      <path d="M196 438Q212 426 222 450L228 490Q216 510 202 494L190 458Q186 444 196 438" stroke="#222" stroke-width="3" />
                      <path d="M184 440L206 410L256 392M210 432L250 414L270 480L230 496M220 446L254 432M224 466L262 454M226 480L266 468M228 422L240 460L250 494M256 392L262 412L292 486L250 498L222 504M268 404L290 480M246 400L256 414M176 458Q168 476 182 486M176 458L190 452" />
                      <path d="M46 476L66 514L76 518L70 496L56 472z" fill="#aaa" />
                      <path stroke-dasharray="14 5 3 5" d="M-90 398L24 358M116 504L200 470M188 575L236 668L140 720" stroke-width="1.800" />
                      <path d="M270 640L360 596M286 646L366 606M300 640L304 626" />
                    </g>
                    <g transform="translate(430 120) scale(.33333)" fill="none" stroke="#222" stroke-width="3" stroke-linejoin="round">
                      <path fill="#fff" stroke-width="4" d="M30 488L45 474L67 482L77 503L68 522L49 526L32 511z" />
                      <ellipse cx="49" cy="501" rx="16" ry="20" transform="rotate(-22 49 501)" stroke-width="2" /><ellipse cx="49" cy="501" rx="9" ry="13" transform="rotate(-22 49 501)" stroke-width="4" stroke="#777" />
                      <path d="M62 486L70 490M65 513L70 510" />
                      <ellipse cx="98" cy="475" rx="20" ry="25" transform="rotate(-22 98 475)" /><ellipse cx="95" cy="474" rx="17" ry="23" transform="rotate(-22 95 474)" stroke-width="1" /><ellipse cx="97" cy="475" rx="9" ry="12" transform="rotate(-22 97 475)" stroke-width="2" />
                      <g v-for="(l, i) in lugs" :key="i" :transform="`translate(${l.x} ${l.y})`">
                        <path d="M8 18Q12 36 14 50L24 70Q36 66 37 56L26 34Q20 20 20 8z" fill="#fff" />
                        <ellipse cx="0" cy="0" rx="19" ry="24" transform="rotate(-22)" fill="#fff" />
                        <ellipse cx="2" cy="2" rx="17" ry="22" transform="rotate(-22)" stroke-width="1" />
                        <ellipse cx="0" cy="-1" rx="9" ry="12" transform="rotate(-22)" stroke-width="2" />
                        <path d="M13 42L30 34" stroke-width="2" />
                        <path d="M25 70L33 86M35 64L43 80" />
                        <text x="32" y="94" transform="rotate(66 32 94)" class="wire">7777</text>
                      </g>
                      <path d="M259 558L264 574Q262 582 272 580L279 573L272 560M300 539L304 555Q304 562 312 559L318 553L311 540" stroke-width="4" />
                      <path d="M214 584C230 610 220 636 198 660L120 724C90 750 76 800 92 824C110 850 144 846 164 826" stroke-width="3" />
                      <path d="M227 582C238 612 226 642 206 666L128 732C102 756 88 798 100 818C116 836 140 832 160 816" stroke-width="3" />
                      <path d="M222 788L280 774M220 798L278 784M236 818C250 800 266 790 290 788M236 828C256 812 274 802 292 800M250 842C276 834 292 820 288 802M252 852C284 844 304 824 298 800" stroke-width="3" />
                      <path d="M182 846L166 850Q154 858 164 864L184 858M198 876L168 886Q158 890 168 900L204 888" stroke-width="4" />
                      <path fill="#fff" stroke-width="3" d="M276 768L296 746L310 752L342 734L354 700Q360 684 374 676L434 652Q446 650 452 658L464 680L480 732Q478 746 470 750L410 776L370 768L320 800Q308 810 300 802L284 784z" />
                      <path d="M296 746Q280 770 306 802M310 752Q296 772 318 798M318 748Q308 768 330 792M280 768L298 762M354 700Q364 730 342 734M374 676L402 676L414 694L420 738L408 776M402 676L438 656M414 694L452 674L462 680M420 738L478 724M426 700L458 688L466 716L434 728zM438 706L454 700L458 712L442 716zM330 752L420 722M340 776L414 752M380 770Q390 762 410 776" stroke-width="2" />
                      <path stroke-dasharray="14 5 3 5" d="M250 390L292 366M478 690L510 672" stroke-width="1.800" />
                      <text x="172" y="826" transform="rotate(-20 172 826)" class="wire plain">7777</text>
                      <text x="188" y="852" transform="rotate(-20 188 852)" class="wire plain">8876</text>
                      <text x="202" y="878" transform="rotate(-20 202 878)" class="wire plain">7009</text>
                    </g>
                  </svg>
                  <figcaption>8535</figcaption>
                </figure>
                <h2>ОБЩИЙ ВИД С ЭЛЕКТРИЧЕСКИМИ СОЕДИНЕНИЯМИ</h2>
                <table>
                  <colgroup><col class="c1" /><col class="c2" /><col class="c3" /><col class="c4" /></colgroup>
                  <thead>
                    <tr><th colspan="2">Поз.</th><th>Назначение</th><th>Код провода<br />цвет провода</th></tr>
                  </thead>
                  <tbody>
                    <tr><td></td><td>L</td><td class="t"><span class="sel">На клемму J2/B24 от ЭБУ FFC</span></td><td>7009</td></tr>
                    <tr><td>15</td><td>(IG)</td><td class="t">На клемму 87 от реле 25213 (через предохранитель F6-70601)</td><td>8876</td></tr>
                    <tr class="tall"><td></td><td>S</td><td class="t">Плюс (+30)</td><td>7777</td></tr>
                  </tbody>
                  <tbody>
                    <tr><td></td><td>B +</td><td class="t">Плюс +30 питания <mark>генератор</mark>а (клемма S)</td><td>7777</td></tr>
                    <tr><td></td><td></td><td class="t">Плюс +30 на стартер</td><td>7777</td></tr>
                    <tr class="tall"><td></td><td></td><td class="t">Плюс (+30)</td><td>7777</td></tr>
                  </tbody>
                </table>
              </div>
            </article>
          </div>
        </div>

        <div class="scroll">
          <i class="arrow top" />
          <i v-for="m in marks" :key="m.y" class="mark" :style="{ top: m.y + 'px', height: m.h + 'px' }" />
          <i class="thumb" />
          <i class="arrow bottom" />
        </div>

        <form class="find" @submit.prevent>
          <input v-model="query" aria-label="Найти на странице" />
          <span class="count">23/28</span>
          <button type="button" aria-label="Предыдущее"><svg class="i11"><use href="#up" /></svg></button>
          <button type="button" aria-label="Следующее"><svg class="i11"><use href="#down" /></svg></button>
          <button type="button" aria-label="Закрыть поиск"><svg class="i12"><use href="#cross" /></svg></button>
        </form>
      </main>

      <aside class="side">
        <button v-for="s in sideApps" :key="s.icon" :aria-label="s.label"><svg class="i12"><use :href="'#' + s.icon" /></svg></button>
        <div class="side-end">
          <button aria-label="Боковая панель"><svg class="i12"><use href="#panel" /></svg></button>
          <button aria-label="Настройки"><svg class="i12"><use href="#gear" /></svg></button>
        </div>
      </aside>
    </div>

    <footer class="taskbar">
      <div class="apps">
        <button v-for="a in taskApps" :key="a.icon" :aria-label="a.label" :class="{ open: a.open, current: a.icon === 'edge' }">
          <svg class="i16"><use :href="'#' + a.icon" /></svg>
        </button>
      </div>
      <div class="tray">
        <button class="chev" aria-label="Скрытые значки"><svg class="i9"><use href="#up" /></svg></button>
        <span class="lang">РУС</span>
        <svg class="i12"><use href="#net" /></svg>
        <svg class="i12"><use href="#sound" /></svg>
        <svg class="i12"><use href="#battery" /></svg>
        <time class="clock">22:21<br />26.10.2023</time>
      </div>
    </footer>
  </div>
</template>

<style>
html, body { margin: 0; overflow: hidden; }
</style>

<style scoped>
.screen { height: 100vh; display: flex; flex-direction: column; background: #f7f7f7; color: #222; font: 9px/12px "Open Sans", "Noto Sans", sans-serif; }
.sprite { position: absolute; width: 0; height: 0; }
button { display: flex; align-items: center; justify-content: center; padding: 0; border: 0; background: none; color: #333; font: inherit; }
input { min-width: 0; padding: 0; border: 0; outline: 0; background: none; color: inherit; font: inherit; }
svg { flex: none; display: block; }
.i7 { width: 7px; height: 7px; }
.i9 { width: 9px; height: 9px; }
.i10 { width: 10px; height: 10px; }
.i11 { width: 11px; height: 11px; }
.i12 { width: 12px; height: 12px; }
.i16 { width: 16px; height: 16px; }
.dim { opacity: .5; }

.tabs { display: flex; height: 21px; flex: none; background: #cdcdcd; border-bottom: 1px solid #c2c2c2; }
.work { width: 31px; }
.tabset { display: flex; align-items: center; }
.tabset.first { width: 408px; }
.tabset.rest { flex: 1; }
.tab { flex: 1; justify-content: flex-start; height: 14px; padding-left: 3px; border-left: 1px solid #8a8a8a; min-width: 0; }
.tab-active { width: 24px; height: 22px; background: #f7f7f7; border-radius: 4px 4px 0 0; }
.newtab { width: 23px; }
.winctl { display: flex; justify-content: flex-end; width: 118px; }
.winctl button { width: 31px; }

.address { display: flex; align-items: center; height: 24px; flex: none; }
.nav-left { display: flex; width: 88px; margin-left: 4px; }
.nav-left button, .actions button { flex: 1; height: 20px; }
.pill { flex: 1; display: flex; align-items: center; height: 20px; margin-left: 4px; padding-left: 11px; background: #fff; border-radius: 10px; }
.scheme { width: 29px; margin-left: 5px; color: #666; border-right: 1px solid #bbb; margin-right: 9px; line-height: 10px; }
.url { flex: 1; }
.pill-find { width: 26px; height: 16px; border-radius: 8px; background: #e6e6e6; }
.pill-star { width: 26px; margin-right: 4px; }
.actions { display: flex; width: 237px; margin-left: 3px; }

.body { flex: 1; min-height: 0; display: flex; }
.viewer { position: relative; flex: 1; min-width: 0; display: flex; margin: 0 0 3px 3px; border-radius: 6px; box-shadow: 0 0 2px #bbb; background: #f7f7f7; }
.column { flex: 1; min-width: 0; display: flex; flex-direction: column; }
.toolbar { display: flex; height: 27px; flex: none; border-bottom: 1px solid #c8c8c8; }
.tools { display: flex; align-items: center; }
.tools.left, .tools.right { flex: 1 1 0; }
.tools.right { justify-content: flex-end; padding-right: 2px; }
.tools.mid { padding-left: 4px; }
.sep { width: 1px; height: 11px; background: #c4c4c4; flex: none; }
.sep.far { margin-left: 10px; }
.sep.near { margin-right: 11px; margin-left: -4px; }
.sep.gap { margin: 0 2px; width: 2px; background: #d8d8d8; }
.w9 { width: 9px; }
.w24 { width: 24px; }
.w26 { width: 26px; }
.w29 { width: 29px; }
.w39 { width: 39px; }
.tools.left > .w29 { margin-right: 5px; }
.soft { color: #777; }
.off { color: #c9c9c9; }
.draw { width: 91px; padding-left: 13px; justify-content: flex-start; gap: 7px; }
.read { white-space: nowrap; }
.pressed { height: 20px; background: #e3e3e3; border-radius: 2px; }
.page-no { width: 24px; height: 18px; margin: 0 7px 0 4px; border: 1px solid #bbb; border-radius: 2px; background: #fff; text-align: center; font-size: 8px; }
.total { width: 36px; font-size: 8px; white-space: nowrap; }

.canvas { flex: 1; min-height: 0; overflow: hidden; display: flex; justify-content: center; background: #e5e5e5; }
.sheet { width: 529px; height: 760px; flex: none; box-sizing: border-box; padding: 20px 50px 0 25px; background: #fff; box-shadow: 0 0 3px #aaa; }
.frame { height: 100%; box-sizing: border-box; padding: 26px 2px 0; border: solid #555; border-width: 0 1px; font-family: Lato, "Open Sans", sans-serif; }
figure { margin: 0; }
.drawing { width: 330px; height: 310px; margin-left: 45px; }
.drawing .edge { stroke: #222; stroke-width: 3; }
.wire { font: italic 700 24px "Liberation Sans", sans-serif; fill: #111; stroke: #111; stroke-width: 1; }
.wire.plain { font-style: normal; }
figcaption { margin-top: 27px; text-align: right; font: 5px/10px "Open Sans", sans-serif; color: #333; margin-right: -1px; }
h2 { margin: 18px 0 9px; font-size: 7px; line-height: 10px; font-weight: 400; color: #555; }
table { width: 449px; table-layout: fixed; border-collapse: collapse; border: 2px solid #111; font-size: 8px; line-height: 10px; color: #222; }
.c1 { width: 27px; }
.c2 { width: 22px; }
.c3 { width: 333px; }
th, td { padding: 0; }
th { height: 20px; font-weight: 500; border: 1px solid #222; }
tbody { border-top: 1px solid #111; }
td { text-align: center; vertical-align: top; height: 10px; }
td:nth-child(2) { text-align: right; padding-right: 3px; border-right: 1px solid #222; }
td:nth-child(4) { border-left: 1px solid #222; }
.t { text-align: left; padding-left: 2px; color: #555; }
.tall td { height: 64px; }
.sel { display: inline-block; background: #9bc0dc; }
mark { background: #ff0; color: inherit; }

.scroll { position: relative; width: 11px; flex: none; background: #fcfcfc; border-radius: 0 6px 6px 0; }
.arrow { position: absolute; left: 2px; border: solid transparent; border-width: 0 4px; }
.arrow.top { top: 6px; border-bottom: 5px solid #8a8a8a; }
.arrow.bottom { bottom: 5px; border-top: 5px solid #8a8a8a; }
.mark { position: absolute; left: 0; right: 0; background: #d6950f; }
.thumb { position: absolute; left: 3px; top: 487px; width: 6px; height: 11px; border-radius: 3px; background: rgba(90, 90, 90, .75); }
.find { position: absolute; right: 211px; top: -2px; width: 291px; height: 27px; box-sizing: border-box; display: flex; align-items: center; padding: 0 6px 0 5px; background: #fff; border-radius: 5px; box-shadow: 0 0 3px #999; font-size: 8px; }
.find input { flex: 1; }
.find .count { width: 32px; color: #666; border-right: 1px solid #ddd; line-height: 16px; margin-right: 6px; }
.find button { width: 21px; height: 20px; }

.side { width: 29px; flex: none; display: flex; flex-direction: column; padding-top: 1px; padding-bottom: 1px; box-sizing: border-box; }
.side button { width: 28px; height: 27px; flex: none; }
.side-end { margin: auto 4px 0; border-top: 1px solid #ccc; padding-top: 2px; display: flex; flex-direction: column; align-items: center; }

.taskbar { height: 32px; flex: none; display: flex; justify-content: space-between; color: #f2f4f6; background: linear-gradient(90deg, #202d38 0, #1c2b3b 16%, #18284a 22%, #10224f 25%, #10224f 31%, #12293f 35%, #10224f 43%, #10224f 50%, #1c2036 63%, #10224f 71%, #112451 78%, #1a2c3c 84%, #1b2a38 100%); }
.apps { display: flex; width: 616px; margin-left: 7px; }
.apps button { position: relative; flex: 1; margin: 3px 1px; border-radius: 3px; }
.apps .open::after { content: ""; position: absolute; bottom: 0; width: 4px; height: 2px; border-radius: 1px; background: #9aa3ad; }
.apps .current { background: #263a60; }
.apps .current::after { width: 10px; background: #55c4f5; }
.tray { display: flex; align-items: center; gap: 4px; padding-right: 13px; }
.tray .chev { color: #fff; width: 20px; }
.lang { width: 22px; margin-left: 26px; font-size: 8px; }
.clock { width: 45px; text-align: right; font-size: 8px; line-height: 10px; }
</style>
